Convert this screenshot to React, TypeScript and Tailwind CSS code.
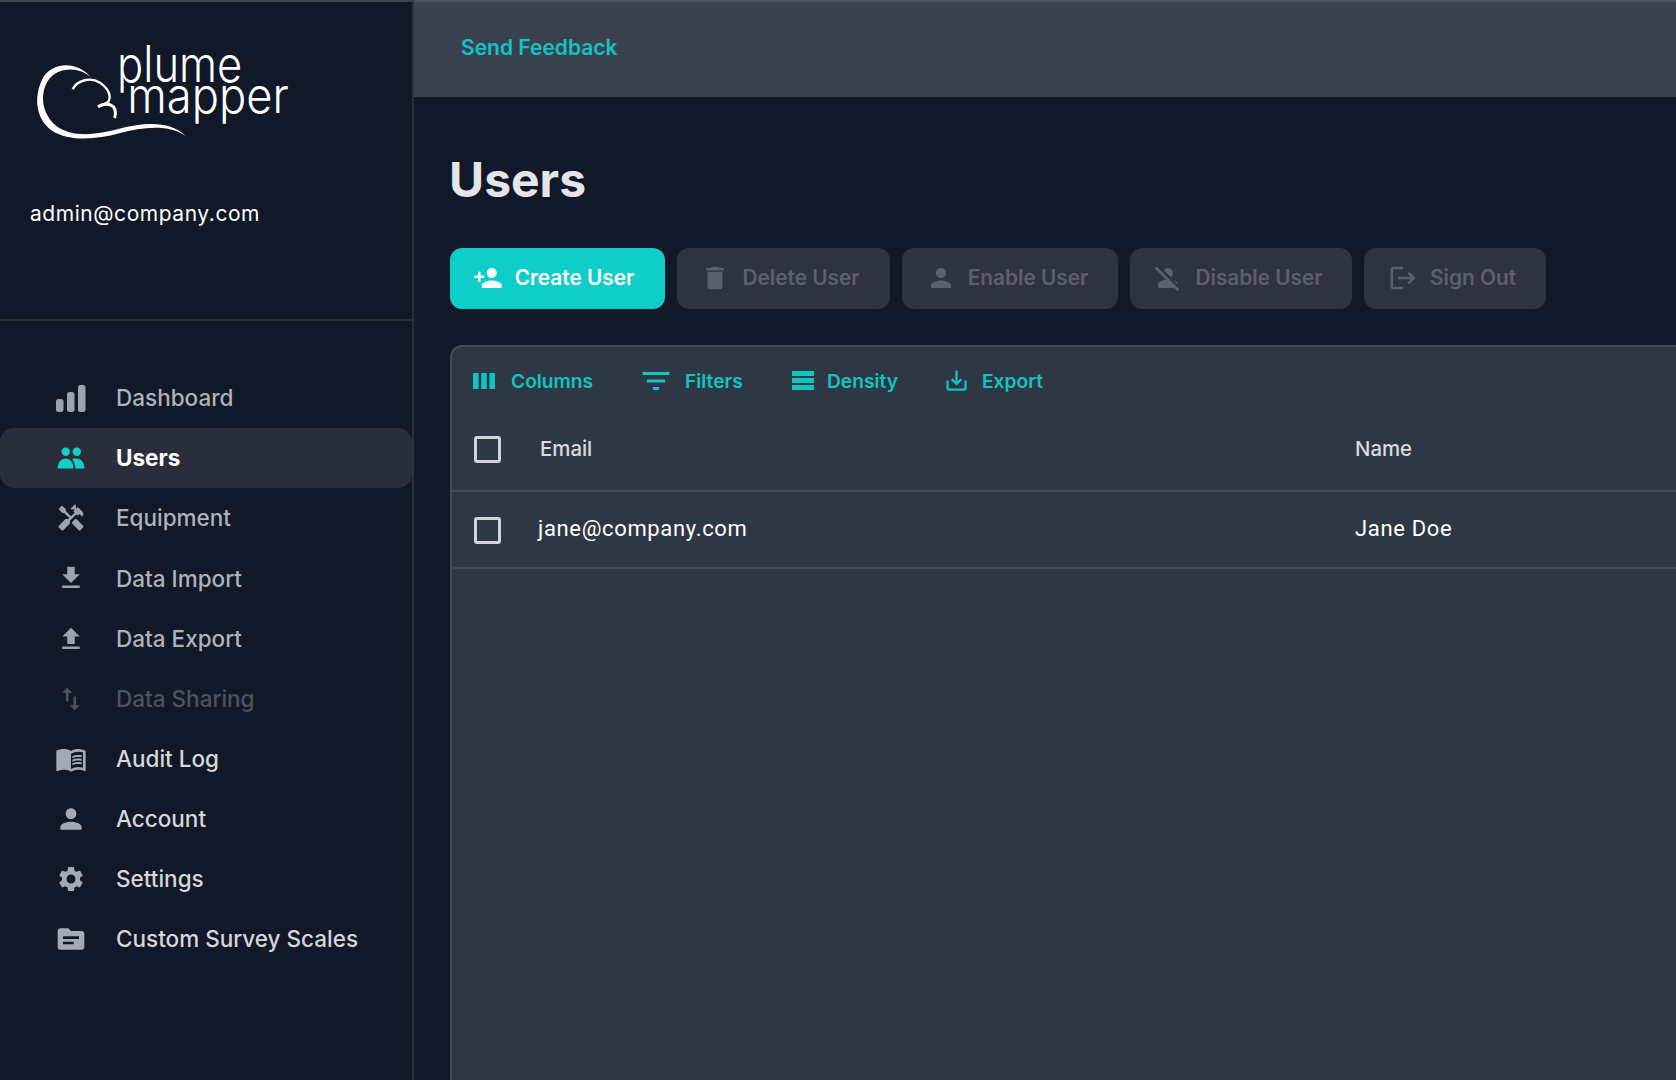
import React from "react";
import {
  MdHandyman, MdFileDownload, MdFileUpload, MdSwapVert, MdMenuBook, MdPerson, MdSettings, MdTopic,
  MdPersonAdd, MdDelete, MdPersonOff, MdLogout, MdFilterList, MdSaveAlt,
} from "react-icons/md";

function BarsIcon({ className }: { className?: string }) {
  return (
    <svg viewBox="0 0 30 27" className={className} fill="currentColor">
      <rect x="0" y="14" width="7.5" height="13" rx="2.5" />
      <rect x="11" y="7" width="7.5" height="20" rx="2.5" />
      <rect x="22" y="0" width="7.5" height="27" rx="2.5" />
    </svg>
  );
}

function UsersIcon({ className }: { className?: string }) {
  return (
    <svg viewBox="0 0 28 24" className={className} fill="currentColor">
      <circle cx="8.5" cy="5" r="4.4" />
      <circle cx="20" cy="5" r="4.4" />
      <path d="M0 22.5C0 16 4 12 8.5 12C13 12 16.5 16 16.5 22.5Z" />
      <path d="M15 12.6C16.6 12.1 18.2 12 20 12C24.5 12 28 16 28 22.5H18.4C18.4 18.4 17.2 15 15 12.6Z" />
    </svg>
  );
}

function ColumnsIcon({ className }: { className?: string }) {
  return (
    <svg viewBox="0 0 22 16" className={className} fill="currentColor">
      <rect x="0" y="0" width="5.6" height="16" rx="0.8" />
      <rect x="8.2" y="0" width="5.6" height="16" rx="0.8" />
      <rect x="16.4" y="0" width="5.6" height="16" rx="0.8" />
    </svg>
  );
}

function DensityIcon({ className }: { className?: string }) {
  return (
    <svg viewBox="0 0 22 19" className={className} fill="currentColor">
      <rect x="0" y="0" width="22" height="5" />
      <rect x="0" y="7" width="22" height="5" />
      <rect x="0" y="14" width="22" height="5" />
    </svg>
  );
}

function Logo() {
  return (
    <svg viewBox="0 0 840 360" className="w-[280px] h-[120px] block">
      <path
        fill="#fff"
        d="M214 144C178 108 112 110 84 152C56 196 68 262 118 294C166 322 226 314 292 298C372 276 452 272 497 318C450 284 374 288 298 310C226 330 146 334 96 302C44 266 40 192 72 138C108 90 180 98 214 144Z"
      />
      <path d="M158 178C172 150 212 140 240 158C264 176 274 196 266 214C258 222 246 226 234 230" fill="none" stroke="#fff" strokeWidth="7" />
      <path d="M234 230C258 216 296 220 284 264" fill="none" stroke="#fff" strokeWidth="9" />
      <text x="291" y="156" fill="#fff" fontFamily="Inter, sans-serif" fontWeight="300" fontSize="150" textLength="376" lengthAdjust="spacingAndGlyphs">plume</text>
      <text x="322" y="250" fill="#fff" fontFamily="Inter, sans-serif" fontWeight="300" fontSize="150" textLength="484" lengthAdjust="spacingAndGlyphs">mapper</text>
    </svg>
  );
}

const nav = [
  { label: "Dashboard", Icon: BarsIcon, icon: "w-[30px] h-[27px]", text: "text-[#aeb2ba] font-[450]", color: "text-[#9ca3af]" },
  { label: "Users", Icon: UsersIcon, icon: "w-[28px] h-[23px]", text: "text-white font-bold", color: "text-[#12cdc8]", active: true },
  { label: "Equipment", Icon: MdHandyman, icon: "w-[30px] h-[30px]", text: "text-[#aeb2ba] font-[450]", color: "text-[#9ca3af]" },
  { label: "Data Import", Icon: MdFileDownload, icon: "w-[30px] h-[30px]", text: "text-[#aeb2ba] font-[450]", color: "text-[#9ca3af]" },
  { label: "Data Export", Icon: MdFileUpload, icon: "w-[30px] h-[30px]", text: "text-[#aeb2ba] font-[450]", color: "text-[#9ca3af]" },
  { label: "Data Sharing", Icon: MdSwapVert, icon: "w-[30px] h-[30px]", text: "text-[#4d5260] font-[450]", color: "text-[#4d5260]" },
  { label: "Audit Log", Icon: MdMenuBook, icon: "w-[32px] h-[32px]", text: "text-[#d5d7db] font-[450]", color: "text-[#a3a9b5]" },
  { label: "Account", Icon: MdPerson, icon: "w-[32px] h-[32px]", text: "text-[#d5d7db] font-[450]", color: "text-[#a3a9b5]" },
  { label: "Settings", Icon: MdSettings, icon: "w-[30px] h-[30px]", text: "text-[#d5d7db] font-[450]", color: "text-[#a3a9b5]" },
  { label: "Custom Survey Scales", Icon: MdTopic, icon: "w-[32px] h-[32px]", text: "text-[#d5d7db] font-[450]", color: "text-[#a3a9b5]" },
];

const buttons = [
  { label: "Delete User", Icon: MdDelete, w: "w-[213px] pr-[7px]" },
  { label: "Enable User", Icon: MdPerson, w: "w-[216px] pr-[6px]" },
  { label: "Disable User", Icon: MdPersonOff, w: "w-[222px] pr-[6px]" },
  { label: "Sign Out", Icon: MdLogout, w: "w-[182px] pr-[6px]" },
];

const tools = [
  { label: "Columns", Icon: ColumnsIcon, w: "w-[170px]", icon: "w-[22px] h-[16px] mr-[16px]" },
  { label: "Filters", Icon: MdFilterList, w: "w-[149px]", icon: "w-[36px] h-[36px] -ml-[5px] mr-[11px]" },
  { label: "Density", Icon: DensityIcon, w: "w-[154px]", icon: "w-[22px] h-[19px] mr-[13px]" },
  { label: "Export", Icon: MdSaveAlt, w: "w-[100px]", icon: "w-[27px] h-[27px] -ml-[3px] mr-[12px]" },
];

export default function App() {
  return (
    <div className="flex h-[1080px] w-[1676px] overflow-hidden bg-[#111827] font-['Inter',sans-serif]">
      <aside className="w-[414px] shrink-0 border-r-2 border-[#2a313f] border-t-2 border-t-[#3a4250] flex flex-col">
        <div className="h-[319px] border-b-2 border-[#2a313f] pl-[20px] pt-[28px]">
          <Logo />
          <div className="mt-[50px] pl-[10px] text-[21px] leading-[28px] tracking-[0.55px] text-white">admin@company.com</div>
        </div>
        <nav className="pt-[47px] flex flex-col">
          {nav.map(({ label, Icon, icon, text, color, active }) => (
            <div
              key={label}
              className={`h-[60.15px] flex items-center ${active ? "bg-[#2a2e3a] rounded-[14px]" : ""}`}
            >
              <div className={`w-[116px] pl-[51px] pr-[25px] flex items-center justify-center ${color}`}>
                <Icon className={`${icon} shrink-0`} />
              </div>
              <span className={`text-[22.5px] ${text}`}>{label}</span>
            </div>
          ))}
        </nav>
      </aside>
      <main className="flex-1 min-w-0 flex flex-col">
        <header className="h-[97px] shrink-0 bg-[#3a4250] pl-[47px] pb-[4px] flex items-center border-t-2 border-[#4a5260]">
          <span className="text-[21px] font-semibold text-[#12c4c0]">Send Feedback</span>
        </header>
        <div className="pl-[36px] pt-[50px] flex-1 flex flex-col min-h-0">
          <h1 className="text-[48px] -ml-[1px] leading-[66px] font-bold text-[#e3e5e9]">Users</h1>
          <div className="mt-[35px] flex gap-[12px]">
            <button className="w-[215px] h-[61px] pb-[2px] pr-[8px] rounded-[12px] bg-[#0fcdc8] text-white flex items-center justify-center gap-[12px] text-[20.8px] font-semibold">
              <MdPersonAdd className="w-[30px] h-[30px]" />
              Create User
            </button>
            {buttons.map(({ label, Icon, w }) => (
              <button key={label} className={`${w} h-[61px] pb-[2px] rounded-[12px] bg-[#2f3341] text-[#5c606c] flex items-center justify-center gap-[12px] text-[20.8px] font-semibold`}>
                <Icon className="w-[30px] h-[30px]" />
                {label}
              </button>
            ))}
          </div>
          <section className="mt-[36px] flex-1 bg-[#2e3844] rounded-tl-[12px] border-l-2 border-t-2 border-[#454c57] flex flex-col">
            <div className="h-[68px] flex items-center pl-[21px]">
              {tools.map(({ label, Icon, w, icon }) => (
                <div key={label} className={`${w} flex items-center text-[#12c4c0] text-[19.2px] font-semibold`}>
                  <Icon className={`${icon} shrink-0`} />
                  {label}
                </div>
              ))}
            </div>
            <div className="h-[77px] flex items-center border-b-2 border-[#454c57] pb-[6px]">
              <div className="w-[88px] pl-[22px]"><div className="w-[27px] h-[27px] rounded-[3px] border-[3px] border-[#d1d5db]" /></div>
              <div className="w-[815px] text-[20.4px] font-medium text-[#d9dbe0]">Email</div>
              <div className="text-[20.4px] font-medium text-[#d9dbe0]">Name</div>
            </div>
            <div className="h-[77px] flex items-center border-b-2 border-[#3d4651]">
              <div className="w-[86px] pl-[22px] pt-[2px]"><div className="w-[27px] h-[27px] rounded-[3px] border-[3px] border-[#d1d5db]" /></div>
              <div className="w-[817px] pb-[2px] text-[22px] tracking-[0.65px] text-white font-['Roboto',sans-serif]">jane@company.com</div>
              <div className="pb-[2px] text-[22px] tracking-[0.65px] text-white font-['Roboto',sans-serif]">Jane Doe</div>
            </div>
          </section>
        </div>
      </main>
    </div>
  );
}
